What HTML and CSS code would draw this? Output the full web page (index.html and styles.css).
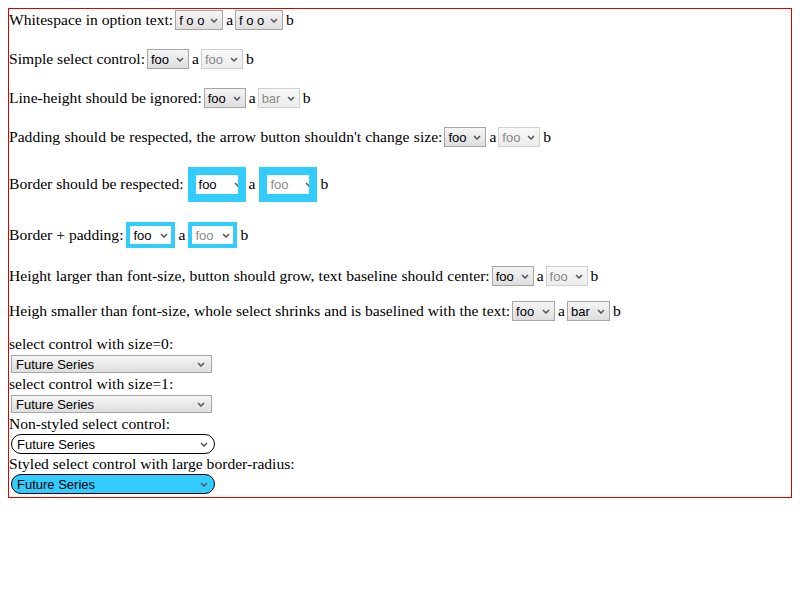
FILE: index.html
```html
<!DOCTYPE html>
<html>
<head>
<meta charset="utf-8">
<link rel="stylesheet" href="styles.css">
</head>
<body>
<div class="frame">
  <div class="row r1">Whitespace in option text:<span class="sel w48"><span class="val pre">f o o</span><svg class="chev" viewBox="0 0 8 5"><path d="M1 1 L4 4 L7 1"/></svg></span>a<span class="sel w48"><span class="val pre">f o o</span><svg class="chev" viewBox="0 0 8 5"><path d="M1 1 L4 4 L7 1"/></svg></span>b</div>

  <div class="row r2">Simple select control:<span class="sel w42"><span class="val">foo</span><svg class="chev" viewBox="0 0 8 5"><path d="M1 1 L4 4 L7 1"/></svg></span>a<span class="sel w42 dis"><span class="val">foo</span><svg class="chev" viewBox="0 0 8 5"><path d="M1 1 L4 4 L7 1"/></svg></span>b</div>

  <div class="row r3">Line-height should be ignored:<span class="sel w42"><span class="val">foo</span><svg class="chev" viewBox="0 0 8 5"><path d="M1 1 L4 4 L7 1"/></svg></span>a<span class="sel w42 dis"><span class="val">bar</span><svg class="chev" viewBox="0 0 8 5"><path d="M1 1 L4 4 L7 1"/></svg></span>b</div>

  <div class="row r4"><span class="txt">Padding should be respected, the arrow button shouldn't change size:</span><span class="sel w42"><span class="val">foo</span><svg class="chev" viewBox="0 0 8 5"><path d="M1 1 L4 4 L7 1"/></svg></span>a<span class="sel w42 dis"><span class="val">foo</span><svg class="chev" viewBox="0 0 8 5"><path d="M1 1 L4 4 L7 1"/></svg></span>b</div>

  <div class="row r5">Border should be respected:<span class="bsel"><span class="val">foo</span><svg class="chev clip" viewBox="0 0 8 5"><path d="M1 1 L4 4 L7 1"/></svg></span>a<span class="bsel dis"><span class="val">foo</span><svg class="chev clip" viewBox="0 0 8 5"><path d="M1 1 L4 4 L7 1"/></svg></span>b</div>

  <div class="row r6">Border + padding:<span class="psel"><span class="val">foo</span><svg class="chev" viewBox="0 0 8 5"><path d="M1 1 L4 4 L7 1"/></svg></span>a<span class="psel dis"><span class="val">foo</span><svg class="chev" viewBox="0 0 8 5"><path d="M1 1 L4 4 L7 1"/></svg></span>b</div>

  <div class="row r7"><span class="txt">Height larger than font-size, button should grow, text baseline should center:</span><span class="sel w42"><span class="val">foo</span><svg class="chev" viewBox="0 0 8 5"><path d="M1 1 L4 4 L7 1"/></svg></span>a<span class="sel w42 dis"><span class="val">foo</span><svg class="chev" viewBox="0 0 8 5"><path d="M1 1 L4 4 L7 1"/></svg></span>b</div>

  <div class="row r8">Heigh smaller than font-size, whole select shrinks and is baselined with the text:<span class="sel w43"><span class="val">foo</span><svg class="chev" viewBox="0 0 8 5"><path d="M1 1 L4 4 L7 1"/></svg></span>a<span class="sel w43"><span class="val">bar</span><svg class="chev" viewBox="0 0 8 5"><path d="M1 1 L4 4 L7 1"/></svg></span>b</div>

  <div class="label first">select control with size=0:</div>
  <div class="wide"><span class="val">Future Series</span><svg class="chev" viewBox="0 0 8 5"><path d="M1 1 L4 4 L7 1"/></svg></div>
  <div class="label">select control with size=1:</div>
  <div class="wide"><span class="val">Future Series</span><svg class="chev" viewBox="0 0 8 5"><path d="M1 1 L4 4 L7 1"/></svg></div>
  <div class="label">Non-styled select control:</div>
  <div class="round"><span class="val">Future Series</span><svg class="chev" viewBox="0 0 8 5"><path d="M1 1 L4 4 L7 1"/></svg></div>
  <div class="label">Styled select control with large border-radius:</div>
  <div class="round blue"><span class="val">Future Series</span><svg class="chev" viewBox="0 0 8 5"><path d="M1 1 L4 4 L7 1"/></svg></div>
</div>
</body>
</html>
```
FILE: styles.css
```css
html, body {
  margin: 0;
  padding: 0;
  background: #fff;
}
body {
  padding: 8px;
  font-family: "Liberation Serif", "Times New Roman", serif;
  font-size: 15.6px;
  color: #000;
}
.frame {
  border: 1px solid #e00000;
  width: 782px;
  height: 488px;
}
.row {
  white-space: nowrap;
}
.r1 { height: 20px; line-height: 20px; margin-top: 1px; }
.r2 { height: 20px; line-height: 20px; margin-top: 19px; }
.r3 { height: 20px; line-height: 20px; margin-top: 19px; }
.r4 { height: 20px; line-height: 20px; margin-top: 19px; }
.r5 { height: 36px; line-height: 36px; margin-top: 19px; }
.r6 { height: 26px; line-height: 26px; margin-top: 20px; }
.r7 { height: 20px; line-height: 20px; margin-top: 18px; }
.r8 { height: 20px; line-height: 20px; margin-top: 15px; }
.r4 .txt { word-spacing: 0.4px; }
.r7 .txt { word-spacing: 0.3px; }

.sel, .bsel, .psel, .wide, .round {
  box-sizing: border-box;
  display: inline-flex;
  align-items: center;
  font-family: "Liberation Sans", Arial, sans-serif;
  font-size: 13px;
  line-height: 15px;
  color: #000;
  vertical-align: middle;
  overflow: hidden;
}
.sel, .bsel, .psel {
  margin: 0 3px 0 2px;
}
.r5 .bsel { margin-left: 4px; }
.r6 .psel { margin-left: 3px; }
.sel {
  height: 20px;
  border: 1px solid #a6a6a6;
  background: linear-gradient(#f5f5f5, #dedede);
  padding: 0 4px 0 3px;
  position: relative;
  top: -1px;
}
.sel.dis {
  border-color: #d0d0d0;
  background: linear-gradient(#f8f8f8, #ececec);
  color: #8a8a8a;
}
.w48 { width: 48px; }
.w42 { width: 42px; }
.w43 { width: 43px; }
.pre { white-space: pre; }
.chev {
  width: 8px;
  height: 5px;
  margin-left: auto;
  flex: none;
}
.chev path {
  fill: none;
  stroke: #555;
  stroke-width: 1.5;
}
.bsel {
  width: 58px;
  height: 35px;
  border: 8px solid #33ccff;
  background: #fff;
  padding-left: 3px;
  position: relative;
  top: -1px;
}
.bsel .chev.clip {
  margin-right: -4px;
}
.bsel.dis .val, .psel.dis .val { color: #8a8a8a; }
.psel {
  width: 49px;
  height: 26px;
  border: 4px solid #33ccff;
  background: #fff;
  padding: 0 3px 0 3px;
  position: relative;
  top: -1px;
}
.label {
  height: 20px;
  line-height: 20px;
}
.label.first { margin-top: 13px; }
.wide {
  display: flex;
  width: 201px;
  height: 18px;
  margin: 1px 0 1px 2px;
  border: 1px solid #a6a6a6;
  background: linear-gradient(#f5f5f5, #dedede);
  padding: 0 6px 0 4px;
}
.round {
  display: flex;
  width: 204px;
  height: 20px;
  margin: 0 0 0 2px;
  border: 1px solid #000;
  border-radius: 10px;
  background: #fff;
  padding: 0 6px 0 5px;
}
.round.blue {
  background: #33ccff;
}
```
